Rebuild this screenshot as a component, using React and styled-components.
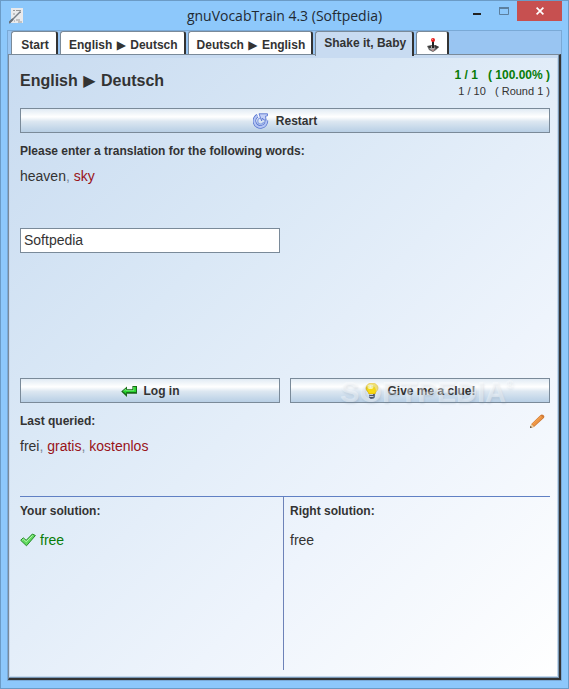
import React, { useState } from "react";
import styled, { createGlobalStyle } from "styled-components";

const ink = "#333333";
const edge = "#7a8a99";

const Page = createGlobalStyle`
  * { box-sizing: border-box; }
  body { margin: 0; color: ${ink}; font: 12px/16px "Liberation Sans", Arial, sans-serif; }
  button, input { font: inherit; color: inherit; }
`;

const Window = styled.div`
  min-height: 100vh;
  display: flex;
  flex-direction: column;
  padding: 0 6px 7px;
  border: 1px solid #6b9bc6;
  background: #8dc8fb;
`;

const TitleBar = styled.header`
  display: grid;
  grid-template-columns: 95px 1fr 95px;
  height: 29px;
  flex: none;
`;

const AppIcon = styled.svg`
  width: 16px;
  height: 16px;
  margin: 7px 0 0 2px;
`;

const Title = styled.h1`
  margin: 0;
  text-align: center;
  white-space: nowrap;
  color: #222a33;
  font: 14px/30px "Open Sans", "Noto Sans", sans-serif;
`;

const WindowControls = styled.div`
  display: flex;
  justify-content: flex-end;
`;

const WindowButton = styled.button`
  display: flex;
  flex: none;
  width: ${(p) => (p.$close ? 45 : 27)}px;
  height: 20px;
  padding: 0;
  border: 0;
  align-items: center;
  justify-content: center;
  background: ${(p) => (p.$close ? "#c75050" : "transparent")};
`;

const Frame = styled.div`
  flex: 1;
  display: flex;
  flex-direction: column;
  border: 1px solid #7aa9d6;
  background: #99c5f2;
`;

const TabStrip = styled.div`
  display: flex;
  gap: 2px;
  height: 23px;
  padding-left: 3px;
  flex: none;
`;

const Tab = styled.button`
  display: flex;
  align-items: center;
  justify-content: center;
  height: ${(p) => (p.$active ? 25 : 23)}px;
  padding: ${(p) => (p.$active ? "0 6px 3px 8px" : "3px 6px 0 8px")};
  border: 1px solid ${edge};
  border-right: 2px solid ${ink};
  border-bottom: 0;
  border-radius: 3px 3px 0 0;
  background: ${(p) => (p.$active ? "#c8dbf1" : "#ffffff")};
  font-weight: bold;
  white-space: pre;
  z-index: ${(p) => (p.$active ? 1 : 0)};

  &:first-child {
    min-width: 47px;
  }
`;

const Arrow = styled.span`
  margin: 0 1px;
  font-family: "DejaVu Sans", sans-serif;
  font-weight: normal;
  line-height: 1;
`;

const Panel = styled.main`
  flex: 1;
  display: flex;
  flex-direction: column;
  padding: 0 9px 8px 11px;
  border: 1px solid ${edge};
  border-right: 2px solid ${ink};
  border-bottom: 2px solid ${ink};
  box-shadow: inset -1px -1px #7896b4, inset -2px -2px #c6d9ec, inset 1px 3px #c8dbf1;
  background: linear-gradient(135deg, #c8dbf0 0%, #dae8f6 34%, #eef4fc 68%, #ffffff 100%);
`;

const Heading = styled.div`
  display: flex;
  justify-content: space-between;
  height: 53px;
  flex: none;
`;

const Direction = styled.h2`
  margin: 0;
  font-size: 16px;
  line-height: 51px;
`;

const Stats = styled.div`
  padding-top: 12px;
  text-align: right;
  white-space: pre;
`;

const Score = styled.div`
  color: #087c08;
  font-weight: bold;
`;

const Round = styled.div`
  font-size: 11px;
`;

const ActionButton = styled.button`
  position: relative;
  display: flex;
  width: 100%;
  height: 25px;
  padding: 1px 0 0;
  border: 1px solid ${edge};
  align-items: center;
  justify-content: center;
  gap: 7px;
  background: linear-gradient(#e1ebf4 0%, #ffffff 34%, #dce7f1 54%, #b8cfe5 100%);
  font-weight: bold;
`;

const Label = styled.label`
  display: block;
  font-weight: bold;
`;

const Prompt = styled(Label)`
  margin-top: 10px;
`;

const Words = styled.p`
  margin: 8px 0 0;
  font-size: 14px;
  line-height: 18px;
`;

const Comma = styled.span`
  color: #7b8796;
`;

const Synonym = styled.span`
  color: #991218;
`;

const Answer = styled.input`
  width: calc(50% - 5px);
  height: 25px;
  margin-top: 43px;
  padding: 0 3px 1px;
  border: 1px solid ${edge};
  border-radius: 0;
  font-size: 14px;
`;

const Actions = styled.div`
  display: grid;
  grid-template-columns: 1fr 1fr;
  gap: 10px;
  margin-top: 125px;
`;

const Watermark = styled.span`
  position: absolute;
  left: 49px;
  top: -2px;
  color: rgba(255, 255, 255, 0.4);
  text-shadow: 1px 2px 2px rgba(100, 120, 140, 0.14);
  font-size: 29px;
  line-height: 30px;
  pointer-events: none;
`;

const Registered = styled.sup`
  font-size: 10px;
  line-height: 0;
  vertical-align: 14px;
`;

const LastHeader = styled.div`
  display: flex;
  justify-content: space-between;
  margin-top: 10px;
  height: 16px;
`;

const EditButton = styled.button`
  width: 16px;
  height: 16px;
  padding: 0;
  border: 0;
  margin-right: 5px;
  background: none;
`;

const Solutions = styled.div`
  flex: 1;
  display: grid;
  grid-template-columns: calc(50% - 1px) 1fr;
  margin-top: 41px;
  border-top: 1px solid #6080c4;
`;

const Solution = styled.section`
  padding: 6px 0 0 ${(p) => (p.$right ? 6 : 0)}px;
  border-right: ${(p) => (p.$right ? "0" : "1px solid #6d82b8")};
`;

const SolutionText = styled.p`
  display: flex;
  align-items: center;
  gap: 4px;
  margin: 12px 0 0;
  color: ${(p) => (p.$correct ? "#087c08" : ink)};
  font-size: 14px;
  line-height: 18px;
`;

const SolutionTitle = styled.h3`
  margin: 0;
  font-size: 12px;
`;

const Icon = styled.svg`
  display: block;
  width: 16px;
  height: 16px;
  flex: none;
`;

const Joystick = () => (
  <Icon viewBox="0 0 16 16" aria-hidden="true">
    <path d="M2 9 6 8h4l4 2-3 3-3 2-4-2z" fill="#666" />
    <path d="m4 10 3-1 1 2 3-1-3 4-3-2z" fill="#aaa" />
    <path d="M3 9h3v2H4zm7-1 4 2-3 2-1-2z" fill="#393939" />
    <path d="M8 4v7" stroke="#222" strokeWidth="2" />
    <path d="M8 12v2" stroke="#c77e82" />
    <circle cx="8" cy="3" r="2" fill="#e51d1d" />
    <circle cx="7.5" cy="2.4" r=".7" fill="#ff8072" />
  </Icon>
);

const RestartIcon = () => (
  <Icon viewBox="0 0 16 16" aria-hidden="true">
    <path d="M4.6 2.6A6 6 0 1 0 13.4 7.5" fill="none" stroke="#5875cf" strokeWidth="3.6" />
    <path d="M4.6 2.6A6 6 0 1 0 13.4 7.5" fill="none" stroke="#b5c6f4" strokeWidth="2" />
    <path d="M7.2 5.2A3 3 0 1 0 10.6 9" fill="none" stroke="#8ba3e6" strokeWidth="1.2" />
    <path d="M6 .8h8.5v2l-2 .4.6 3.8h-2.4L9.4 5 8.6 8 7.2 4z" fill="#c3d0f7" stroke="#5875cf" strokeWidth=".9" />
  </Icon>
);

const EnterIcon = () => (
  <Icon viewBox="0 0 16 16" aria-hidden="true">
    <path d="M.2 8.4 6 3.4v2.8h5.4V3H16v7.7H6V14z" fill="#176a17" />
    <path d="M2 8.2 5.2 5.6v1.7h7.2V4h2.6v5H5.2v2z" fill="#26d52b" />
    <path d="m2.4 8 2.4-1.9v1.5h8V4" fill="none" stroke="#8df28c" strokeWidth=".7" />
  </Icon>
);

const BulbIcon = () => (
  <Icon viewBox="0 0 16 16" aria-hidden="true">
    <path d="M5 11C4.8 9 2 7.7 2 5a6 5 0 0 1 12 0c0 2.7-2.8 4-3 6z" fill="#f8da13" stroke="#d8a800" strokeWidth=".8" />
    <ellipse cx="6.5" cy="3.7" rx="3" ry="2.3" fill="#fffaa2" />
    <circle cx="6.4" cy="3.4" r="1" fill="#fff" />
    <path d="M5.2 11h5.6v3.5L9.5 16h-3l-1.3-1.5z" fill="#4c5367" />
    <path d="M5.2 11.5h4M5.5 13.5h4" stroke="#d5dae4" strokeWidth=".9" />
  </Icon>
);

const PencilIcon = () => (
  <Icon viewBox="0 0 16 16" aria-hidden="true">
    <path d="m1 15 1.3-4L11.6 2q1.2-1.2 2.8 0t.7 2.7L5 14z" fill="#cf7935" />
    <path d="m3 11 8.8-8.3 2 1.9-9 8.5z" fill="#f4a150" />
    <path d="m4 12.2 9-8.3" stroke="#e88c38" />
    <path d="m1 15 1.3-4 2.7 2.8z" fill="#eed4a7" />
    <path d="m1 15 .6-2 1.3 1.3z" fill="#30302d" />
  </Icon>
);

const CheckIcon = () => (
  <Icon viewBox="0 0 16 16" aria-hidden="true">
    <path d="M.7 8.3 3.2 5.8 6.2 8.3 12.4 2l3 1.5-8.9 10.3z" fill="#5fd95d" stroke="#278b2c" />
    <path d="m2.2 8.2 1.2-1 2.9 2.6 6.4-6.4" fill="none" stroke="#b8f7ae" />
  </Icon>
);

const tabs = [
  { id: "start", label: "Start" },
  { id: "en-de", label: <Pair from="English" to="Deutsch" /> },
  { id: "de-en", label: <Pair from="Deutsch" to="English" /> },
  { id: "shake", label: "Shake it, Baby", active: true },
  { id: "game", label: <Joystick />, title: "Game" },
];

function Pair({ from, to }) {
  return (
    <span>
      {from} <Arrow>▶</Arrow> {to}
    </span>
  );
}

const WordList = ({ words }) => (
  <Words>
    {words.map((word, i) =>
      i === 0 ? (
        <span key={word}>{word}</span>
      ) : (
        <React.Fragment key={word}>
          <Comma>, </Comma>
          <Synonym>{word}</Synonym>
        </React.Fragment>
      )
    )}
  </Words>
);

export default function App() {
  const [answer, setAnswer] = useState("Softpedia");
  return (
    <>
      <Page />
      <Window>
        <TitleBar>
          <AppIcon viewBox="0 0 16 16" aria-hidden="true">
            <path d="M2 0h12v15H2z" fill="#e9eaec" />
            <path d="M4 2.5h2m1 0h5M10 4.5h2M4 6h2m1 6h4m-2 2h4M5 13h1" stroke="#999" />
            <path d="M1 14 11.5 3.5" stroke="#777f87" strokeWidth="1.4" />
            <path d="m0 15 4-4" stroke="#687079" strokeWidth="2" />
          </AppIcon>
          <Title>gnuVocabTrain 4.3 (Softpedia)</Title>
          <WindowControls>
            <WindowButton aria-label="Minimize">
              <svg width="8" height="8" aria-hidden="true"><path d="M0 6h8v2H0z" fill="#222" /></svg>
            </WindowButton>
            <WindowButton aria-label="Maximize">
              <svg width="10" height="8" aria-hidden="true"><path d="M.5 1h9v6.5h-9z" fill="none" stroke="#5c7f9e" /><path d="M0 1h10" stroke="#5c7f9e" strokeWidth="2" /></svg>
            </WindowButton>
            <WindowButton $close aria-label="Close">
              <svg width="8" height="8" aria-hidden="true"><path d="m.6.6 6.8 6.8M7.4.6.6 7.4" stroke="#fff" strokeWidth="1.7" /></svg>
            </WindowButton>
          </WindowControls>
        </TitleBar>
        <Frame>
          <TabStrip role="tablist">
            {tabs.map((tab) => (
              <Tab key={tab.id} role="tab" aria-selected={!!tab.active} aria-label={tab.title} $active={tab.active}>
                {tab.label}
              </Tab>
            ))}
          </TabStrip>
          <Panel>
            <Heading>
              <Direction><Pair from="English" to="Deutsch" /></Direction>
              <Stats>
                <Score>{"1 / 1   ( 100.00% )"}</Score>
                <Round>{"1 / 10   ( Round 1 )"}</Round>
              </Stats>
            </Heading>
            <ActionButton><RestartIcon />Restart</ActionButton>
            <Prompt htmlFor="answer">Please enter a translation for the following words:</Prompt>
            <WordList words={["heaven", "sky"]} />
            <Answer id="answer" value={answer} onChange={(e) => setAnswer(e.target.value)} />
            <Actions>
              <ActionButton><EnterIcon />Log in</ActionButton>
              <ActionButton>
                <BulbIcon />Give me a clue!
                <Watermark aria-hidden="true">SOFTPEDIA<Registered>®</Registered></Watermark>
              </ActionButton>
            </Actions>
            <LastHeader>
              <SolutionTitle>Last queried:</SolutionTitle>
              <EditButton aria-label="Edit"><PencilIcon /></EditButton>
            </LastHeader>
            <WordList words={["frei", "gratis", "kostenlos"]} />
            <Solutions>
              <Solution>
                <SolutionTitle>Your solution:</SolutionTitle>
                <SolutionText $correct><CheckIcon />free</SolutionText>
              </Solution>
              <Solution $right>
                <SolutionTitle>Right solution:</SolutionTitle>
                <SolutionText>free</SolutionText>
              </Solution>
            </Solutions>
          </Panel>
        </Frame>
      </Window>
    </>
  );
}
